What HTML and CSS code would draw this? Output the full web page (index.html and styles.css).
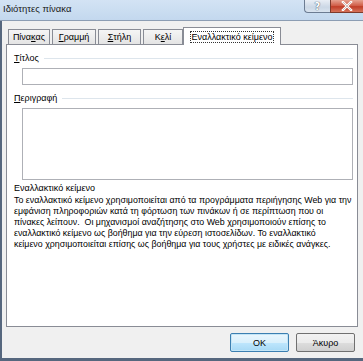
FILE: index.html
```html
<!DOCTYPE html>
<html lang="el">
<head>
<meta charset="utf-8">
<title>Ιδιότητες πίνακα</title>
<link rel="stylesheet" href="styles.css">
</head>
<body>
<div class="window">
  <div class="titlebar">
    <span class="title">Ιδιότητες πίνακα</span>
    <div class="caption-buttons">
      <div class="cbtn help"><span>?</span></div>
      <div class="cbtn close">
        <svg width="12" height="10" viewBox="0 0 12 10"><path d="M2 1 L10 9 M10 1 L2 9" stroke="#fff" stroke-width="2.4" stroke-linecap="square"/><path d="M2 1 L10 9 M10 1 L2 9" stroke="#5a2a20" stroke-width="0.6" fill="none" opacity="0.5"/></svg>
      </div>
    </div>
  </div>
  <div class="client">
    <div class="tabs">
      <div class="tab t1">Πίνα<u>κ</u>ας</div>
      <div class="tab t2"><u>Γ</u>ραμμή</div>
      <div class="tab t3"><u>Σ</u>τήλη</div>
      <div class="tab t4">Κ<u>ε</u>λί</div>
      <div class="tab active"><span class="focus">Εναλλακτικό κείμενο</span></div>
    </div>
    <div class="panel">
      <div class="group"><span><u>Τ</u>ίτλος</span><i class="rule"></i></div>
      <div class="input"></div>
      <div class="group g2"><span><u>Π</u>εριγραφή</span><i class="rule"></i></div>
      <div class="textarea"></div>
      <div class="heading">Εναλλακτικό κείμενο</div>
      <div class="desc">
        <div>Το εναλλακτικό κείμενο χρησιμοποιείται από τα προγράμματα περιήγησης Web για την</div>
        <div>εμφάνιση πληροφοριών κατά τη φόρτωση των πινάκων ή σε περίπτωση που οι</div>
        <div>πίνακες λείπουν.&nbsp; Οι μηχανισμοί αναζήτησης στο Web χρησιμοποιούν επίσης το</div>
        <div>εναλλακτικό κείμενο ως βοήθημα για την εύρεση ιστοσελίδων. Το εναλλακτικό</div>
        <div>κείμενο χρησιμοποιείται επίσης ως βοήθημα για τους χρήστες με ειδικές ανάγκες.</div>
      </div>
    </div>
    <div class="buttons">
      <div class="btn ok">OK</div>
      <div class="btn">Άκυρο</div>
    </div>
  </div>
</div>
</body>
</html>
```
FILE: styles.css
```css
html, body {
  margin: 0;
  padding: 0;
  width: 363px;
  height: 361px;
  overflow: hidden;
  background: #f0f0f0;
  font-family: "Liberation Sans", "DejaVu Sans", sans-serif;
  font-size: 9px;
  color: #000;
}
u { text-decoration: underline; text-underline-offset: 1px; }
.window {
  width: 363px;
  height: 361px;
  display: flex;
  flex-direction: column;
}
.titlebar {
  height: 20px;
  flex: none;
  display: flex;
  align-items: flex-start;
  justify-content: space-between;
  background: linear-gradient(#d3e3f4, #c3d8ee);
  border-bottom: 1px solid #8c9db3;
}
.title {
  padding: 3px 0 0 3px;
  font-size: 9.5px;
  color: #1b1b1b;
}
.caption-buttons {
  display: flex;
  height: 13px;
}
.cbtn {
  height: 12px;
  display: flex;
  align-items: center;
  justify-content: center;
  border: 1px solid #6c7c92;
  border-top: none;
}
.help {
  width: 25px;
  border-radius: 0 0 0 4px;
  background: linear-gradient(#e9eef5, #cbd7e5 60%, #d9e3ef);
  border-right: none;
}
.help span {
  font-family: "DejaVu Sans", sans-serif;
  font-size: 10px;
  font-weight: bold;
  color: #fff;
  text-shadow: 0 0 1px #4d5a6c, 0 0 1px #4d5a6c;
  line-height: 11px;
}
.close {
  width: 32px;
  border-right: none;
  background: linear-gradient(#e6a190, #cf5a44 50%, #c03d27 55%, #d6735b);
  border-color: #7e3a2c;
}
.client {
  flex: 1;
  border-left: 2px solid #56677e;
  border-bottom: 3px solid #56677e;
  background: #f0f0f0;
  padding: 6px 0 0 4px;
  display: flex;
  flex-direction: column;
}
.tabs {
  display: flex;
  align-items: flex-end;
  height: 17px;
  padding-left: 2px;
  position: relative;
  z-index: 1;
}
.tab {
  border: 1px solid #898c95;
  border-bottom: none;
  background: linear-gradient(#f5f5f5, #e4e4e4);
  margin-right: 2px;
  display: flex;
  align-items: center;
  justify-content: center;
  color: #000;
  box-sizing: border-box;
  height: 15px;
}
.t1 { width: 42px; }
.t2 { width: 44px; }
.t3 { width: 43px; }
.t4 { width: 40px; }
.tab.active {
  width: 98px;
  height: 18px;
  background: #fff;
  margin-left: -2px;
  margin-bottom: -1px;
}
.focus {
  border: 1px dotted #333;
  padding: 0 1px;
  line-height: 10px;
}
.panel {
  width: 352px;
  height: 283px;
  box-sizing: border-box;
  border: 1px solid #898c95;
  background: #fff;
  padding: 7px 4px 0 7px;
}
.group {
  display: flex;
  align-items: center;
  gap: 5px;
  height: 12px;
}
.rule {
  flex: 1;
  height: 1px;
  background: #dde5ec;
}
.g2 { margin-top: 7px; }
.input {
  margin: 4px 0 0 8px;
  height: 17px;
  box-sizing: border-box;
  border: 1px solid #aeb0b6;
}
.textarea {
  margin: 4px 0 0 8px;
  height: 72px;
  box-sizing: border-box;
  border: 1px solid #aeb0b6;
}
.heading {
  margin-top: 2px;
  line-height: 12px;
}
.desc {
  margin-top: 1px;
  font-size: 8.85px;
  line-height: 11px;
  white-space: nowrap;
}
.buttons {
  display: flex;
  justify-content: flex-end;
  gap: 7px;
  padding: 6px 8px 0 0;
}
.btn {
  width: 59px;
  height: 19px;
  box-sizing: border-box;
  border: 1px solid #707070;
  border-radius: 2px;
  background: linear-gradient(#f2f2f2, #ebebeb 50%, #dddddd 51%, #cfcfcf);
  display: flex;
  align-items: center;
  justify-content: center;
}
.btn.ok {
  border-color: #3c7fb1;
  background: linear-gradient(#eaf6fd, #d9f0fc 50%, #bee6fd 51%, #a7d9f5);
  box-shadow: inset 0 0 0 1px #c4e5f6;
}
```
